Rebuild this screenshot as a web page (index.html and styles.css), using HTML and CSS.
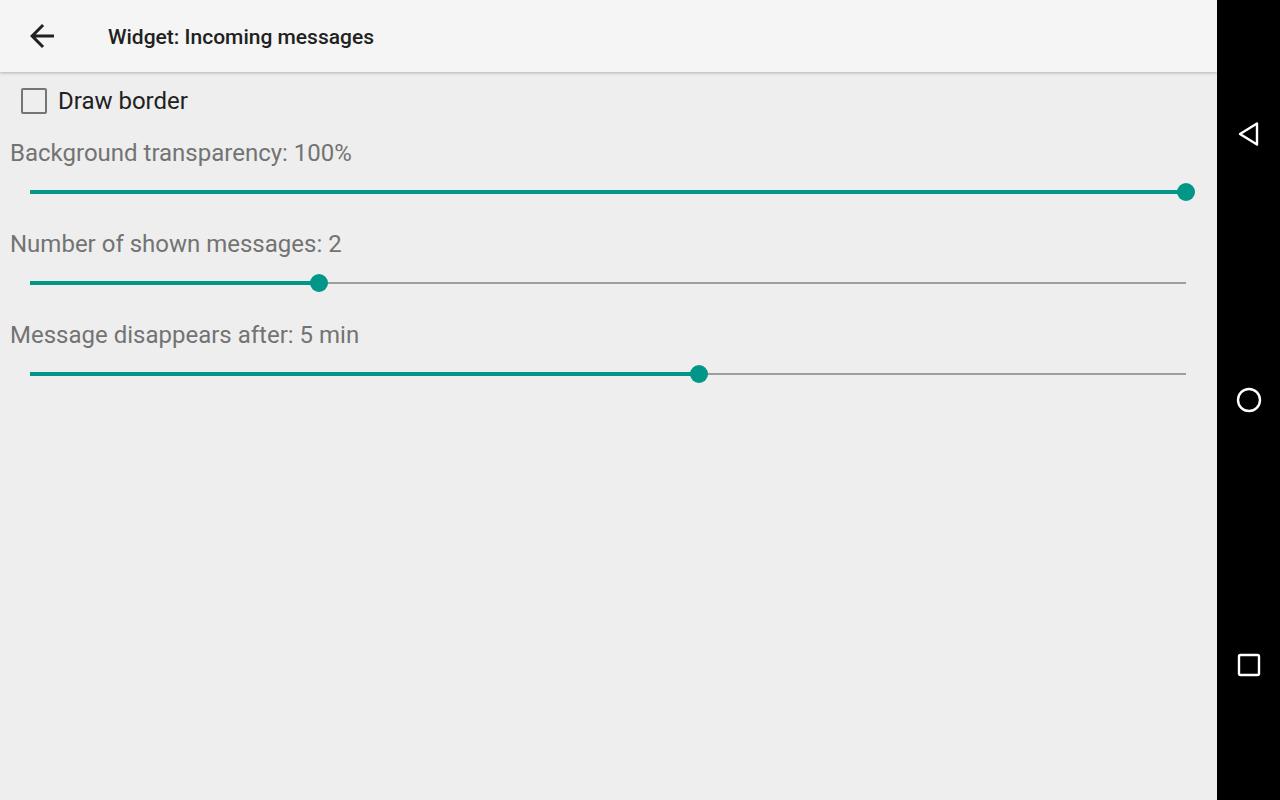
FILE: index.html
```html
<!DOCTYPE html>
<html lang="en">
<head>
    <meta charset="UTF-8">
    <meta name="viewport" content="width=device-width, initial-scale=1.0">
    <title>Widget: Incoming messages</title>
    <link rel="stylesheet" href="styles.css">
</head>
<body>
    <div class="screen">
        <div class="app">
            <header class="toolbar">
                <button class="back" aria-label="Back">
                    <svg width="36" height="36" viewBox="0 0 24 24">
                        <path d="M20 11H7.83l5.59-5.59L12 4l-8 8 8 8 1.41-1.41L7.83 13H20v-2z" fill="#212121"/>
                    </svg>
                </button>
                <h1 class="title">Widget: Incoming messages</h1>
            </header>

            <main class="content">
                <label class="check">
                    <span class="box"></span>
                    <span class="check-label">Draw border</span>
                </label>

                <div class="setting">
                    <div class="setting-label">Background transparency: 100%</div>
                    <div class="slider">
                        <div class="track">
                            <div class="fill" style="width: 100%"></div>
                            <div class="thumb" style="left: 100%"></div>
                        </div>
                    </div>
                </div>

                <div class="setting">
                    <div class="setting-label">Number of shown messages: 2</div>
                    <div class="slider">
                        <div class="track">
                            <div class="fill" style="width: 25%"></div>
                            <div class="thumb" style="left: 25%"></div>
                        </div>
                    </div>
                </div>

                <div class="setting">
                    <div class="setting-label">Message disappears after: 5 min</div>
                    <div class="slider">
                        <div class="track">
                            <div class="fill" style="width: 57.9%"></div>
                            <div class="thumb" style="left: 57.9%"></div>
                        </div>
                    </div>
                </div>
            </main>
        </div>

        <nav class="navbar">
            <svg width="28" height="28" viewBox="0 0 28 28">
                <path d="M22 3.5 L5 14 L22 24.5 Z" fill="none" stroke="#fff" stroke-width="2.4" stroke-linejoin="round"/>
            </svg>
            <svg width="28" height="28" viewBox="0 0 28 28">
                <circle cx="14" cy="14" r="11" fill="none" stroke="#fff" stroke-width="2.4"/>
            </svg>
            <svg width="28" height="28" viewBox="0 0 28 28">
                <rect x="4" y="4" width="20" height="20" rx="1.5" fill="none" stroke="#fff" stroke-width="2.4"/>
            </svg>
        </nav>
    </div>
</body>
</html>
```

FILE: styles.css
```css
body {
    margin: 0;
    font-family: Roboto, "Noto Sans", sans-serif;
    background: #000;
}
.screen {
    display: flex;
    width: 1280px;
    height: 800px;
}
.app {
    width: 1217px;
    background: #eeeeee;
    display: flex;
    flex-direction: column;
}
.toolbar {
    height: 72px;
    background: #f5f5f5;
    display: flex;
    align-items: center;
    box-shadow: 0 1px 3px rgba(0,0,0,0.25);
    position: relative;
    z-index: 1;
}
.back {
    border: none;
    background: none;
    padding: 0;
    margin-left: 24px;
    width: 36px;
    height: 36px;
    cursor: pointer;
}
.back svg {
    display: block;
}
.title {
    margin: 2px 0 0 48px;
    font-size: 21px;
    font-weight: 500;
    color: #212121;
}
.content {
    padding: 14px 31px 0 10px;
}
.check {
    display: flex;
    align-items: center;
    margin-left: 11px;
    height: 30px;
}
.box {
    width: 22px;
    height: 22px;
    border: 2px solid #757575;
    border-radius: 2px;
}
.check-label {
    margin-left: 11px;
    font-size: 24px;
    color: #212121;
}
.setting {
    height: 91px;
    padding-top: 22px;
    box-sizing: border-box;
}
.setting-label {
    font-size: 24px;
    line-height: 30px;
    color: #737373;
}
.slider {
    margin: 15px 0 0 20px;
    height: 18px;
    display: flex;
    align-items: center;
}
.track {
    position: relative;
    flex: 1;
    height: 2px;
    background: #9e9e9e;
}
.fill {
    position: absolute;
    left: 0;
    top: -1px;
    height: 4px;
    background: #009688;
}
.thumb {
    position: absolute;
    top: 1px;
    width: 18px;
    height: 18px;
    margin: -9px 0 0 -9px;
    border-radius: 50%;
    background: #009688;
}
.navbar {
    width: 63px;
    background: #000;
    display: flex;
    flex-direction: column;
    align-items: center;
    justify-content: space-between;
    padding: 120px 0 121px;
    box-sizing: border-box;
}
.navbar svg {
    display: block;
}
```
